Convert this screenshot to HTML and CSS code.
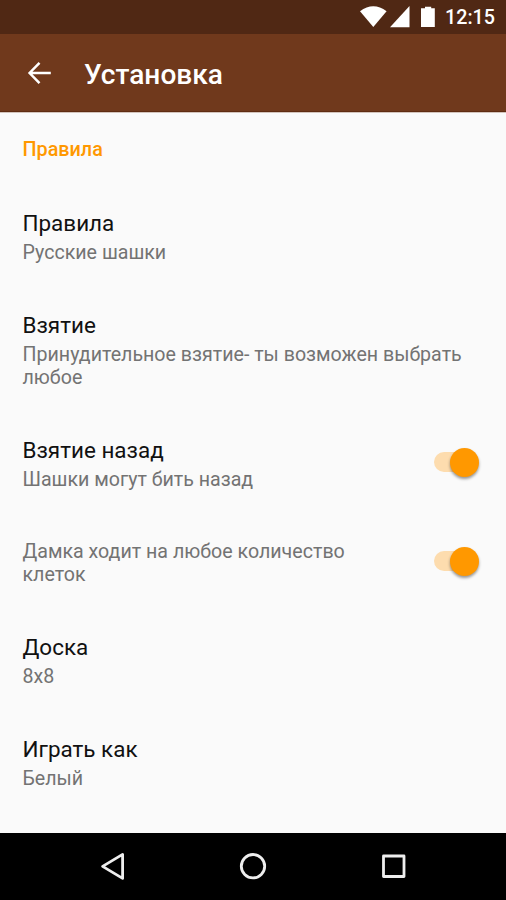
FILE: index.html
```html
<!DOCTYPE html>
<html lang="ru">
<head>
<meta charset="utf-8">
<title>Установка</title>
<link rel="stylesheet" href="styles.css">
</head>
<body>
<div class="screen">
  <div class="status">
    <svg class="signals" width="80" height="24" viewBox="0 0 80 24">
      <path d="M0 6.300Q13.300-3.600 26.600 6.300L13.300 22Z"/>
      <path d="M49.500 1V22.300H30Z"/>
      <path d="M61 3.300H65V1.800H71.200V3.300H74.800V22H61Z"/>
    </svg>
    <span class="clock">12:15</span>
  </div>
  <header class="appbar">
    <svg class="back" width="24" height="24" viewBox="0 0 24 24"><path d="M12.500 1.800L2.600 12L12.500 22.200M2.600 12H23.800"/></svg>
    <h1 class="heading">Установка</h1>
  </header>
  <main class="list">
    <h2 class="category">Правила</h2>
    <section class="row"><div class="text">
      <div class="title">Правила</div>
      <div class="summary">Русские шашки</div>
    </div></section>
    <section class="row"><div class="text">
      <div class="title">Взятие</div>
      <div class="summary">Принудительное взятие- ты возможен выбрать любое</div>
    </div></section>
    <section class="row"><div class="text">
      <div class="title">Взятие назад</div>
      <div class="summary">Шашки могут бить назад</div>
    </div><div class="switch"><div class="thumb"></div></div></section>
    <section class="row untitled"><div class="text">
      <div class="summary">Дамка ходит на любое количество клеток</div>
    </div><div class="switch"><div class="thumb"></div></div></section>
    <section class="row"><div class="text">
      <div class="title">Доска</div>
      <div class="summary">8x8</div>
    </div></section>
    <section class="row"><div class="text">
      <div class="title">Играть как</div>
      <div class="summary">Белый</div>
    </div></section>
  </main>
  <nav class="navbar">
    <svg width="30" height="30" viewBox="0 0 30 30"><path d="M24.600 3.400V27.400L4.600 15.400Z"/></svg>
    <svg width="30" height="30" viewBox="0 0 30 30"><circle cx="15" cy="15.200" r="11.700"/></svg>
    <svg width="30" height="30" viewBox="0 0 30 30"><rect x="4.500" y="5" width="20.500" height="20.500"/></svg>
  </nav>
</div>
</body>
</html>
```
FILE: styles.css
```css
* { box-sizing: border-box; }
body {
  margin: 0;
  font-family: Roboto, "Noto Sans", sans-serif;
  background: #fafafa;
}
.screen {
  display: flex;
  flex-direction: column;
  height: 900px;
  overflow: hidden;
}
.status {
  display: flex;
  flex: none;
  align-items: flex-start;
  justify-content: flex-end;
  height: 34px;
  padding-right: 11px;
  background: #502814;
  color: #fff;
}
.signals {
  margin: 5px 5px 0 0;
  fill: #fff;
}
.clock {
  font-size: 19.7px;
  font-weight: 500;
  line-height: 36px;
}
.appbar {
  display: flex;
  flex: none;
  align-items: center;
  height: 78px;
  padding-left: 27px;
  background: #70391c;
  border-bottom: 1px solid #5f2c12;
  color: #fff;
}
.back {
  fill: none;
  stroke: #fff;
  stroke-width: 2.5;
}
.heading {
  margin: 4px 0 0 33px;
  font-size: 28.1px;
  font-weight: 500;
  line-height: 34px;
}
.list {
  flex: 1;
  min-height: 0;
  overflow: hidden;
  border-top: 1px solid #d3c4bc;
}
.category {
  height: 73px;
  margin: 0;
  padding: 25px 22.5px 0;
  color: #ff9800;
  font-size: 19.8px;
  font-weight: 500;
  line-height: 23px;
}
.row {
  display: flex;
  align-items: center;
  justify-content: space-between;
  padding: 24px 27px 24px 22.5px;
}
.untitled { padding: 25px 27px 24px 22.5px; }
.text { flex: 0 1 445px; }
.row:has(.switch) .text { flex-basis: 360px; }
.title {
  margin-bottom: 5px;
  color: #111;
  font-size: 22.45px;
  line-height: 26px;
}
.summary {
  color: #737373;
  font-size: 19.63px;
  line-height: 23px;
}
.switch {
  display: flex;
  align-items: center;
  justify-content: flex-end;
  width: 45px;
  height: 20px;
  margin-bottom: 4px;
  border-radius: 10px;
  background: linear-gradient(to right, #fddcae 34px, transparent 34px);
}
.thumb {
  flex: none;
  width: 29px;
  height: 29px;
  border-radius: 50%;
  background: #ff9800;
  box-shadow: 0 2px 3px rgba(0, 0, 0, 0.4);
}
.navbar {
  display: flex;
  flex: none;
  align-items: center;
  justify-content: center;
  gap: 110.5px;
  height: 67.5px;
  background: #000;
}
.navbar svg {
  fill: none;
  stroke: #eee;
  stroke-width: 2.8;
  stroke-linejoin: round;
}
```
